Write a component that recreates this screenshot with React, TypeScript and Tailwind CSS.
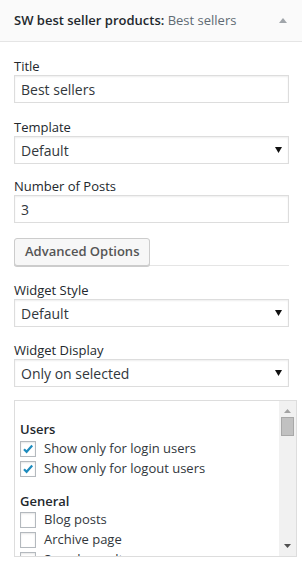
import React from "react"

const font = { fontFamily: '"Open Sans", "Liberation Sans", sans-serif' }

function Label({ text }: { text: string }) {
  return <div className="h-[17px] leading-[17px] text-[13px] text-[#23282d]">{text}</div>
}

function TextInput({ value }: { value: string }) {
  return (
    <div className="h-[28px] w-[275px] border border-[#ddd] shadow-[inset_0_1px_2px_rgba(0,0,0,0.07)] bg-white px-[6px] flex items-center text-[14px] text-[#32373c]">
      {value}
    </div>
  )
}

function SelectBox({ value }: { value: string }) {
  return (
    <div className="h-[28px] w-[275px] border border-[#ddd] shadow-[inset_0_1px_2px_rgba(0,0,0,0.07)] bg-white pl-[6px] pr-[5px] flex items-center justify-between text-[14px] text-[#32373c]">
      <span>{value}</span>
      <svg width="7" height="6" viewBox="0 0 7 6" className="mr-[1px]">
        <path d="M0 0H7L3.5 6Z" fill="#111" />
      </svg>
    </div>
  )
}

function Check({ checked, label }: { checked?: boolean; label: string }) {
  return (
    <div className="flex items-center h-[20px]">
      <div className="w-[16px] h-[16px] border border-[#b4b9be] bg-white shadow-[inset_0_1px_2px_rgba(0,0,0,0.1)] flex items-center justify-center shrink-0">
        {checked && (
          <svg width="12" height="12" viewBox="0 0 12 12">
            <path d="M2 6.2L4.6 8.8L10.2 2.6" stroke="#1e8cbe" strokeWidth="2.2" fill="none" />
          </svg>
        )}
      </div>
      <span className="ml-[8px] text-[13px] text-[#32373c]">{label}</span>
    </div>
  )
}

export default function App() {
  return (
    <div className="w-[302px] h-[570px] bg-white overflow-hidden" style={font}>
      {/* widget header */}
      <div className="h-[42px] bg-[#fafafa] border-b border-[#e5e5e5] flex items-center justify-between pl-[14px] pr-[14px]">
        <div className="text-[13px] font-semibold text-[#23282d]">
          SW best seller products: <span className="font-normal text-[#606a73]">Best sellers</span>
        </div>
        <svg width="8" height="5" viewBox="0 0 8 5" className="mr-[1px]">
          <path d="M0 5H8L4 0Z" fill="#a0a5aa" />
        </svg>
      </div>

      <div className="pl-[14px]">
        <div className="mt-[16px]">
          <Label text="Title" />
          <TextInput value="Best sellers" />
        </div>
        <div className="mt-[16px]">
          <Label text="Template" />
          <SelectBox value="Default" />
        </div>
        <div className="mt-[14px]">
          <Label text="Number of Posts" />
          <TextInput value="3" />
        </div>

        <div className="mt-[15px] w-[275px] border-b border-[#e5e5e5] flex">
          <div className="h-[28px] px-[10px] border border-[#ccc] bg-[#f7f7f7] rounded-[3px] shadow-[0_1px_0_#ccc] flex items-center text-[13px] font-semibold text-[#555] mb-[-1px]">
            Advanced Options
          </div>
        </div>

        <div className="mt-[16px]">
          <Label text="Widget Style" />
          <SelectBox value="Default" />
        </div>
        <div className="mt-[15px]">
          <Label text="Widget Display" />
          <SelectBox value="Only on selected" />
        </div>

        <div className="mt-[13px] w-[283px] h-[157px] border border-[#ddd] flex">
          <div className="flex-1 overflow-hidden pl-[5px] pt-[19px]">
            <div className="text-[13px] font-semibold text-[#23282d] h-[18px] leading-[18px]">Users</div>
            <div className="mt-[1px]">
              <Check checked label="Show only for login users" />
              <Check checked label="Show only for logout users" />
            </div>
            <div className="mt-[13px] text-[13px] font-semibold text-[#23282d] h-[18px] leading-[18px]">General</div>
            <div>
              <Check label="Blog posts" />
              <Check label="Archive page" />
              <Check label="Search results" />
            </div>
          </div>
          {/* scrollbar */}
          <div className="w-[17px] bg-[#f1f1f1] flex flex-col items-center">
            <svg width="7" height="4" viewBox="0 0 7 4" className="mt-[8px]">
              <path d="M0 4H7L3.5 0Z" fill="#a3a3a3" />
            </svg>
            <div className="mt-[4px] w-[13px] h-[19px] bg-[#c1c1c1] border border-[#a8a8a8]" />
            <div className="flex-1" />
            <svg width="7" height="4" viewBox="0 0 7 4" className="mb-[8px]">
              <path d="M0 0H7L3.5 4Z" fill="#505050" />
            </svg>
          </div>
        </div>
      </div>
    </div>
  )
}
